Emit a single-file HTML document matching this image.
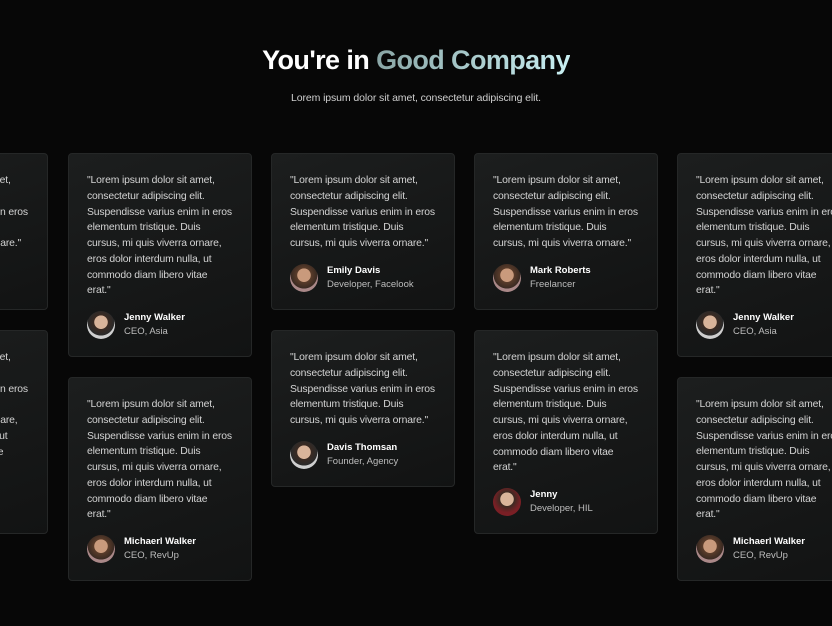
<!DOCTYPE html>
<html><head><meta charset="utf-8"><style>
*{margin:0;padding:0;box-sizing:border-box}
html,body{width:832px;height:626px;overflow:hidden}
body{background:#070707;position:relative;font-family:"Liberation Sans",sans-serif;color:#ddd}
.wrap{position:absolute;left:0;top:0;width:832px;height:626px;overflow:hidden}
h1{position:absolute;top:45px;left:0;width:832px;text-align:center;font-size:27px;font-weight:bold;color:#fff;letter-spacing:-0.6px}
h1 span{background:linear-gradient(90deg,#8aa6a6,#c9f0f3);-webkit-background-clip:text;background-clip:text;color:transparent}
.sub{position:absolute;top:92px;left:0;width:832px;text-align:center;font-size:10.5px;color:#cfcfcf;letter-spacing:-0.1px}
.card{position:absolute;width:184px;border:1px solid #252727;border-radius:4px;background:linear-gradient(160deg,#1c1e1e,#121313);padding:19px 0 0 18px}
.card p{font-size:10.4px;letter-spacing:-0.15px;line-height:15.75px;color:#d4d4d4;white-space:nowrap}
.au{position:absolute;left:18px;bottom:17px;height:28px;display:flex;align-items:center}
.av{width:28px;height:28px;border-radius:50%;margin-right:9px;background:radial-gradient(circle at 50% 40%,#d9b49a 0 30%,#3a2a22 32%,#2a2a2a 60%,#cfcfcf 62%)}
.av.b{background:radial-gradient(circle at 50% 40%,#c99a7c 0 30%,#5a3c2a 32%,#3a2a22 60%,#a88 62%)}
.nm{font-size:9.5px;font-weight:bold;color:#fff;line-height:14px}
.rl{font-size:9.5px;color:#bdbdbd;line-height:14px}
</style></head><body><div class="wrap">
<h1>You're in <span>Good Company</span></h1>
<div class="sub">Lorem ipsum dolor sit amet, consectetur adipiscing elit.</div>

<div class="card" style="left:-136px;top:153px;height:157px"><p>"Lorem ipsum dolor sit amet,<br>consectetur adipiscing elit.<br>Suspendisse varius enim in eros<br>elementum tristique. Duis<br>cursus, mi quis viverra ornare."</p></div>
<div class="card" style="left:-136px;top:330px;height:204px"><p>"Lorem ipsum dolor sit amet,<br>consectetur adipiscing elit.<br>Suspendisse varius enim in eros<br>elementum tristique. Duis<br>cursus, mi quis viverra ornare,<br>eros dolor interdum nulla, ut<br>commodo diam libero vitae</p></div>

<div class="card" style="left:68px;top:153px;height:204px"><p>"Lorem ipsum dolor sit amet,<br>consectetur adipiscing elit.<br>Suspendisse varius enim in eros<br>elementum tristique. Duis<br>cursus, mi quis viverra ornare,<br>eros dolor interdum nulla, ut<br>commodo diam libero vitae<br>erat."</p><div class="au"><div class="av"></div><div><div class="nm">Jenny Walker</div><div class="rl">CEO, Asia</div></div></div></div>
<div class="card" style="left:68px;top:377px;height:204px"><p>"Lorem ipsum dolor sit amet,<br>consectetur adipiscing elit.<br>Suspendisse varius enim in eros<br>elementum tristique. Duis<br>cursus, mi quis viverra ornare,<br>eros dolor interdum nulla, ut<br>commodo diam libero vitae<br>erat."</p><div class="au"><div class="av b"></div><div><div class="nm">Michaerl Walker</div><div class="rl">CEO, RevUp</div></div></div></div>

<div class="card" style="left:271px;top:153px;height:157px"><p>"Lorem ipsum dolor sit amet,<br>consectetur adipiscing elit.<br>Suspendisse varius enim in eros<br>elementum tristique. Duis<br>cursus, mi quis viverra ornare."</p><div class="au"><div class="av b"></div><div><div class="nm">Emily Davis</div><div class="rl">Developer, Facelook</div></div></div></div>
<div class="card" style="left:271px;top:330px;height:157px"><p>"Lorem ipsum dolor sit amet,<br>consectetur adipiscing elit.<br>Suspendisse varius enim in eros<br>elementum tristique. Duis<br>cursus, mi quis viverra ornare."</p><div class="au"><div class="av"></div><div><div class="nm">Davis Thomsan</div><div class="rl">Founder, Agency</div></div></div></div>

<div class="card" style="left:474px;top:153px;height:157px"><p>"Lorem ipsum dolor sit amet,<br>consectetur adipiscing elit.<br>Suspendisse varius enim in eros<br>elementum tristique. Duis<br>cursus, mi quis viverra ornare."</p><div class="au"><div class="av b"></div><div><div class="nm">Mark Roberts</div><div class="rl">Freelancer</div></div></div></div>
<div class="card" style="left:474px;top:330px;height:204px"><p>"Lorem ipsum dolor sit amet,<br>consectetur adipiscing elit.<br>Suspendisse varius enim in eros<br>elementum tristique. Duis<br>cursus, mi quis viverra ornare,<br>eros dolor interdum nulla, ut<br>commodo diam libero vitae<br>erat."</p><div class="au"><div class="av b" style="background:radial-gradient(circle at 50% 40%,#d9b49a 0 30%,#3a2a22 32%,#7a1f25 62%)"></div><div><div class="nm">Jenny</div><div class="rl">Developer, HIL</div></div></div></div>

<div class="card" style="left:677px;top:153px;height:204px"><p>"Lorem ipsum dolor sit amet,<br>consectetur adipiscing elit.<br>Suspendisse varius enim in eros<br>elementum tristique. Duis<br>cursus, mi quis viverra ornare,<br>eros dolor interdum nulla, ut<br>commodo diam libero vitae<br>erat."</p><div class="au"><div class="av"></div><div><div class="nm">Jenny Walker</div><div class="rl">CEO, Asia</div></div></div></div>
<div class="card" style="left:677px;top:377px;height:204px"><p>"Lorem ipsum dolor sit amet,<br>consectetur adipiscing elit.<br>Suspendisse varius enim in eros<br>elementum tristique. Duis<br>cursus, mi quis viverra ornare,<br>eros dolor interdum nulla, ut<br>commodo diam libero vitae<br>erat."</p><div class="au"><div class="av b"></div><div><div class="nm">Michaerl Walker</div><div class="rl">CEO, RevUp</div></div></div></div>
</div></body></html>
